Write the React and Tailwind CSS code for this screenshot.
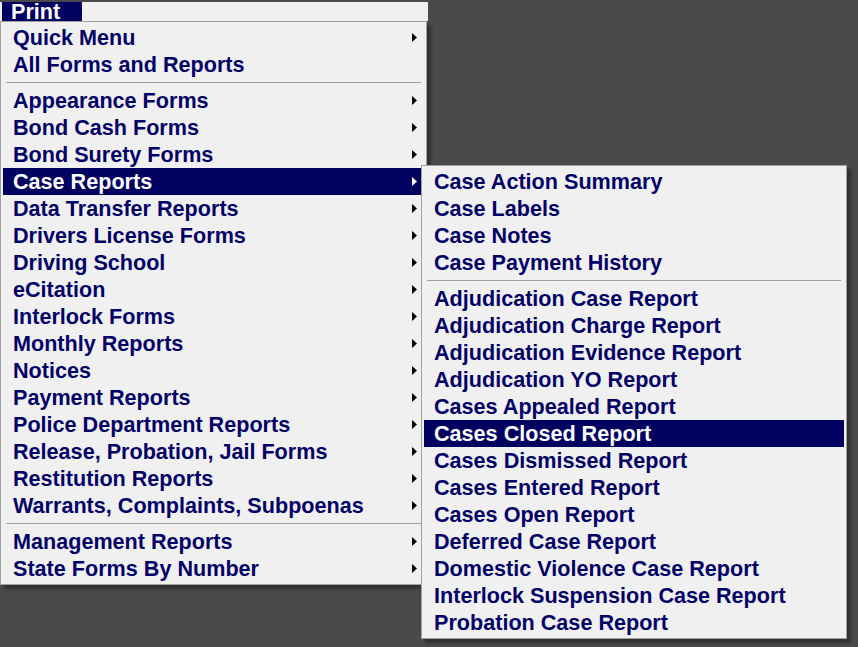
import React from "react";

const mainGroups = [
    [
        { label: "Quick Menu", sub: true },
        { label: "All Forms and Reports", sub: false },
    ],
    [
        { label: "Appearance Forms", sub: true },
        { label: "Bond Cash Forms", sub: true },
        { label: "Bond Surety Forms", sub: true },
        { label: "Case Reports", sub: true, active: true },
        { label: "Data Transfer Reports", sub: true },
        { label: "Drivers License Forms", sub: true },
        { label: "Driving School", sub: true },
        { label: "eCitation", sub: true },
        { label: "Interlock Forms", sub: true },
        { label: "Monthly Reports", sub: true },
        { label: "Notices", sub: true },
        { label: "Payment Reports", sub: true },
        { label: "Police Department Reports", sub: true },
        { label: "Release, Probation, Jail Forms", sub: true },
        { label: "Restitution Reports", sub: true },
        { label: "Warrants, Complaints, Subpoenas", sub: true },
    ],
    [
        { label: "Management Reports", sub: true },
        { label: "State Forms By Number", sub: true },
    ],
];

const caseGroups = [
    [
        { label: "Case Action Summary" },
        { label: "Case Labels" },
        { label: "Case Notes" },
        { label: "Case Payment History" },
    ],
    [
        { label: "Adjudication Case Report" },
        { label: "Adjudication Charge Report" },
        { label: "Adjudication Evidence Report" },
        { label: "Adjudication YO Report" },
        { label: "Cases Appealed Report" },
        { label: "Cases Closed Report", active: true },
        { label: "Cases Dismissed Report" },
        { label: "Cases Entered Report" },
        { label: "Cases Open Report" },
        { label: "Deferred Case Report" },
        { label: "Domestic Violence Case Report" },
        { label: "Interlock Suspension Case Report" },
        { label: "Probation Case Report" },
    ],
];

const Arrow = ({ white }) => (
    <svg width="5" height="9" viewBox="0 0 5 9" className="shrink-0">
        <path d="M0 0 L5 4.5 L0 9 Z" fill={white ? "#ffffff" : "#000000"} />
    </svg>
);

const MenuItem = ({ item }) => (
    <div
        className={`h-[27px] flex items-center justify-between pl-[10px] pr-[7px] ${
            item.active ? "bg-[#000060] text-white" : "text-[#000066]"
        }`}
    >
        <span className="leading-[27px] whitespace-nowrap">{item.label}</span>
        {item.sub && <Arrow white={item.active} />}
    </div>
);

const Separator = () => (
    <div className="h-[9px] flex items-center px-[3px]">
        <div className="h-px w-full bg-[#a0a0a0]" />
    </div>
);

const Menu = ({ groups, className }) => (
    <div
        className={`bg-[#f0f0f0] border border-[#a0a0a0] px-[2px] py-[2px] shadow-[4px_4px_3px_rgba(0,0,0,0.35)] ${className}`}
    >
        {groups.map((group, gi) => (
            <div key={gi}>
                {gi > 0 && <Separator />}
                {group.map((item) => (
                    <MenuItem key={item.label} item={item} />
                ))}
            </div>
        ))}
    </div>
);

export default function App() {
    return (
        <div
            className="relative w-[858px] h-[647px] overflow-hidden bg-[#4a4a4a] pt-[2px] font-bold text-[21.6px]"
            style={{ fontFamily: '"Liberation Sans", Arial, sans-serif' }}
        >
            <div className="w-[428px] h-[19px] bg-[#f0f0f0] flex pl-[2px]">
                <div className="w-[80px] h-[19px] bg-[#000060] text-white leading-[19px] pl-[9px]">Print</div>
            </div>
            <Menu groups={mainGroups} className="w-[427px]" />
            <Menu groups={caseGroups} className="absolute left-[421px] top-[165px] w-[426px]" />
        </div>
    );
}
